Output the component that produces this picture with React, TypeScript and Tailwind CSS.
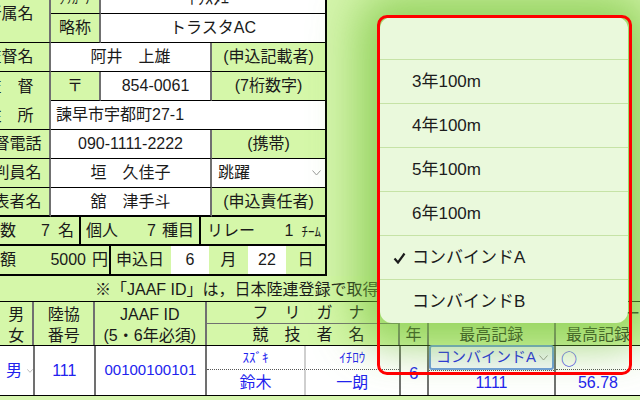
import React from 'react';

const G = 'bg-[#d5f7a9]';
const B = 'border-b border-black';
const R = 'border-r-2 border-r-[#707070]';
const BLUE = 'text-[#2222ee]';

function Chevron({ className = '' }: { className?: string }) {
  return (
    <svg width="9" height="6" viewBox="0 0 9 6" className={className}>
      <path d="M0.5 0.5 L4.5 5 L8.5 0.5" fill="none" stroke="#9a9a9a" strokeWidth="1" />
    </svg>
  );
}

function Check() {
  return (
    <svg width="13" height="12" viewBox="0 0 13 12">
      <path d="M1.5 6.5 L5 10.5 L11.5 1.5" fill="none" stroke="#1c1c1c" strokeWidth="2.2" />
    </svg>
  );
}

const options = ['', '3年100m', '4年100m', '5年100m', '6年100m', 'コンバインドA', 'コンバインドB'];

export default function App() {
  return (
    <div className="relative w-[640px] h-[400px] overflow-hidden bg-[#d5f5ad] text-[#1a1a1a] text-[16px] font-['Liberation_Sans','Noto_Sans_CJK_JP',sans-serif]">
      <div className="-mt-[15px]">
        {/* 申込者情報 */}
        <div className="-ml-[30px] w-[357px] border-r-2 border-black">
          <div className="grid grid-cols-[81px_50px_111px_113px] grid-rows-[repeat(8,29px)]">
            <div className={`${G} ${B} ${R} row-span-2 flex items-center justify-center`}>所属名</div>
            <div className={`${G} ${B} ${R} flex items-center justify-center text-[13px]`}>ﾌﾘｶﾞﾅ</div>
            <div className={`${B} col-span-2 bg-white flex items-center justify-center`}>ﾄﾗｽﾀｴｰ</div>

            <div className={`${G} ${B} ${R} flex items-center justify-center`}>略称</div>
            <div className={`${B} col-span-2 bg-white flex items-center justify-center`}>トラスタAC</div>

            <div className={`${G} ${B} ${R} flex items-center justify-center`}>監督名</div>
            <div className={`${B} ${R} col-span-2 bg-white flex items-center justify-center`}>阿井　上雄</div>
            <div className={`${G} ${B} flex items-center justify-center`}>(申込記載者)</div>

            <div className={`${G} ${B} ${R} row-span-2 flex flex-col items-center justify-center leading-[29px]`}>
              <span>監　督</span>
              <span>住　所</span>
            </div>
            <div className={`${G} ${B} ${R} flex items-center justify-center`}>〒</div>
            <div className={`${B} ${R} bg-white flex items-center justify-center`}>854-0061</div>
            <div className={`${G} ${B} flex items-center justify-center`}>(7桁数字)</div>

            <div className={`${B} col-span-3 bg-white flex items-center pl-[5px]`}>諫早市宇都町27-1</div>

            <div className={`${G} ${B} ${R} flex items-center justify-center`}>監督電話</div>
            <div className={`${B} ${R} col-span-2 bg-white flex items-center justify-center`}>090-1111-2222</div>
            <div className={`${G} ${B} flex items-center justify-center`}>(携帯)</div>

            <div className={`${G} ${B} ${R} flex items-center justify-center`}>審判員名</div>
            <div className={`${B} ${R} col-span-2 bg-white flex items-center justify-center`}>垣　久佳子</div>
            <div className={`${B} bg-white flex items-center justify-between pl-[6px] pr-[4px]`}>
              <span>跳躍</span>
              <Chevron />
            </div>

            <div className={`${G} border-b-2 border-black ${R} flex items-center justify-center`}>代表者名</div>
            <div className={`border-b-2 border-black ${R} col-span-2 bg-white flex items-center justify-center`}>舘　津手斗</div>
            <div className={`${G} border-b-2 border-black flex items-center justify-center`}>(申込責任者)</div>
          </div>

          <div className={`${G} flex h-[29px] border-b-2 border-black`}>
            <div className="w-[111px] flex items-center justify-between pl-[14px] pr-[5px] border-r-2 border-black">
              <span>人数</span>
              <span>7<span className="ml-[8px]">名</span></span>
            </div>
            <div className="w-[120px] flex items-center justify-between pl-[5px] pr-[5px] border-r-2 border-black">
              <span>個人</span>
              <span>7<span className="ml-[6px]">種目</span></span>
            </div>
            <div className="flex-1 flex items-center justify-between pl-[6px] pr-[4px]">
              <span>リレー</span>
              <span>1<span className="ml-[8px] text-[13px]">ﾁｰﾑ</span></span>
            </div>
          </div>

          <div className={`${G} flex h-[30px] border-b-2 border-black`}>
            <div className="w-[141px] flex items-center justify-between pl-[14px] pr-[1px] border-r-2 border-black">
              <span>金額</span>
              <span>5000<span className="ml-[6px]">円</span></span>
            </div>
            <div className="w-[60px] flex items-center pl-[5px]">申込日</div>
            <div className="w-[38px] bg-white flex items-center justify-center">6</div>
            <div className="w-[39px] flex items-center justify-center">月</div>
            <div className="w-[38px] bg-white flex items-center justify-center">22</div>
            <div className="flex-1 flex items-center justify-center">日</div>
          </div>
        </div>

        {/* 注意書き */}
        <div className={`${G} h-[26px] ${B} flex items-center pt-[2px] pl-[95px] whitespace-nowrap`}>
          ※「JAAF ID」は，日本陸連登録で取得している番号を入力してください。
        </div>

        {/* 競技者一覧 */}
        <div className={`${G} flex h-[44px] ${B} leading-[21px] whitespace-nowrap`}>
          <div className={`w-[35px] ${R} flex flex-col items-center justify-center pt-[2px]`}>
            <span>男</span>
            <span>女</span>
          </div>
          <div className={`w-[62px] ${R} flex flex-col items-center justify-center pt-[2px]`}>
            <span>陸協</span>
            <span>番号</span>
          </div>
          <div className={`w-[114px] ${R} flex flex-col items-center justify-center pt-[2px]`}>
            <span>JAAF ID</span>
            <span>(5・6年必須)</span>
          </div>
          <div className={`w-[198px] ${R} flex flex-col`}>
            <div className="h-[22px] border-b border-[#707070] flex items-center justify-center tracking-[16px] pl-[28px]">フリガナ</div>
            <div className="flex-1 flex items-center justify-center tracking-[16px] pl-[28px]">競技者名</div>
          </div>
          <div className={`w-[29px] ${R} flex flex-col`}>
            <div className="h-[22px]" />
            <div className="flex-1 flex items-center justify-center">年</div>
          </div>
          <div className={`w-[130px] ${R} flex flex-col`}>
            <div className="h-[22px]" />
            <div className="flex-1 flex items-center justify-center">最高記録</div>
          </div>
          <div className="w-[84px] shrink-0 flex flex-col">
            <div className="h-[22px] flex items-center justify-end">ー</div>
            <div className="flex-1 flex items-center pl-[10px]">最高記録</div>
          </div>
        </div>

        <div className={`bg-white flex h-[50px] ${B} ${BLUE} text-[16px] whitespace-nowrap`}>
          <div className={`w-[35px] ${R} flex items-center pl-[6px] gap-[5px]`}>
            <span>男</span>
            <Chevron />
          </div>
          <div className={`w-[62px] ${R} flex items-center justify-center`}>111</div>
          <div className={`w-[114px] ${R} flex items-center justify-center text-[15px]`}>00100100101</div>
          <div className={`w-[198px] ${R} flex flex-col`}>
            <div className="h-[24px] flex border-b border-dotted border-[#555]">
              <div className="w-[99px] border-r-2 border-r-[#cfcfcf] flex items-center justify-center text-[13px]">ｽｽﾞｷ</div>
              <div className="flex-1 flex items-center justify-center text-[13px]">ｲﾁﾛｳ</div>
            </div>
            <div className="flex-1 flex">
              <div className="w-[99px] border-r-2 border-r-[#cfcfcf] flex items-center justify-center">鈴木</div>
              <div className="flex-1 flex items-center justify-center">一朗</div>
            </div>
          </div>
          <div className={`w-[29px] ${R} flex items-center justify-center pt-[6px] text-[17px]`}>6</div>
          <div className={`w-[130px] ${R} flex flex-col`}>
            <div className="h-[25px] -mt-px border-2 border-[#6d9be0] rounded-[3px] bg-[#f5f8ff] flex items-center justify-between pl-[5px] pr-[4px] text-[15px]">
              <span>コンバインドA</span>
              <Chevron />
            </div>
            <div className="flex-1 border-t border-dotted border-[#555] flex items-center justify-center">1111</div>
          </div>
          <div className="w-[84px] shrink-0 flex flex-col">
            <div className="h-[24px] flex items-center pl-[5px] border-b border-dotted border-[#555] font-['Noto_Sans_CJK_JP',sans-serif]">○</div>
            <div className="flex-1 flex items-center justify-center">56.78</div>
          </div>
        </div>
      </div>

      {/* 選択ポップオーバー */}
      <div className="absolute left-[380px] top-[17px] w-[248px] h-[306px] rounded-[12px] bg-[#eaf9dc] overflow-hidden shadow-[0_0_45px_22px_rgba(120,195,60,0.7)]">
        {options.map((o, i) => (
          <div
            key={i}
            className={`${i === 0 ? 'h-[43px]' : 'h-[44px]'} ${i < options.length - 1 ? 'border-b border-[#c6e3a6]' : ''} flex items-center text-[17px] text-[#1c1c1c]`}
          >
            <div className="w-[32px] flex justify-end pr-[6px]">{o === 'コンバインドA' ? <Check /> : null}</div>
            <span>{o}</span>
          </div>
        ))}
      </div>

      {/* 注釈の赤枠 */}
      <div className="absolute left-[377px] top-[15px] w-[255px] h-[360px] rounded-[10px] border-[3px] border-[#ff0000]" />
    </div>
  );
}
